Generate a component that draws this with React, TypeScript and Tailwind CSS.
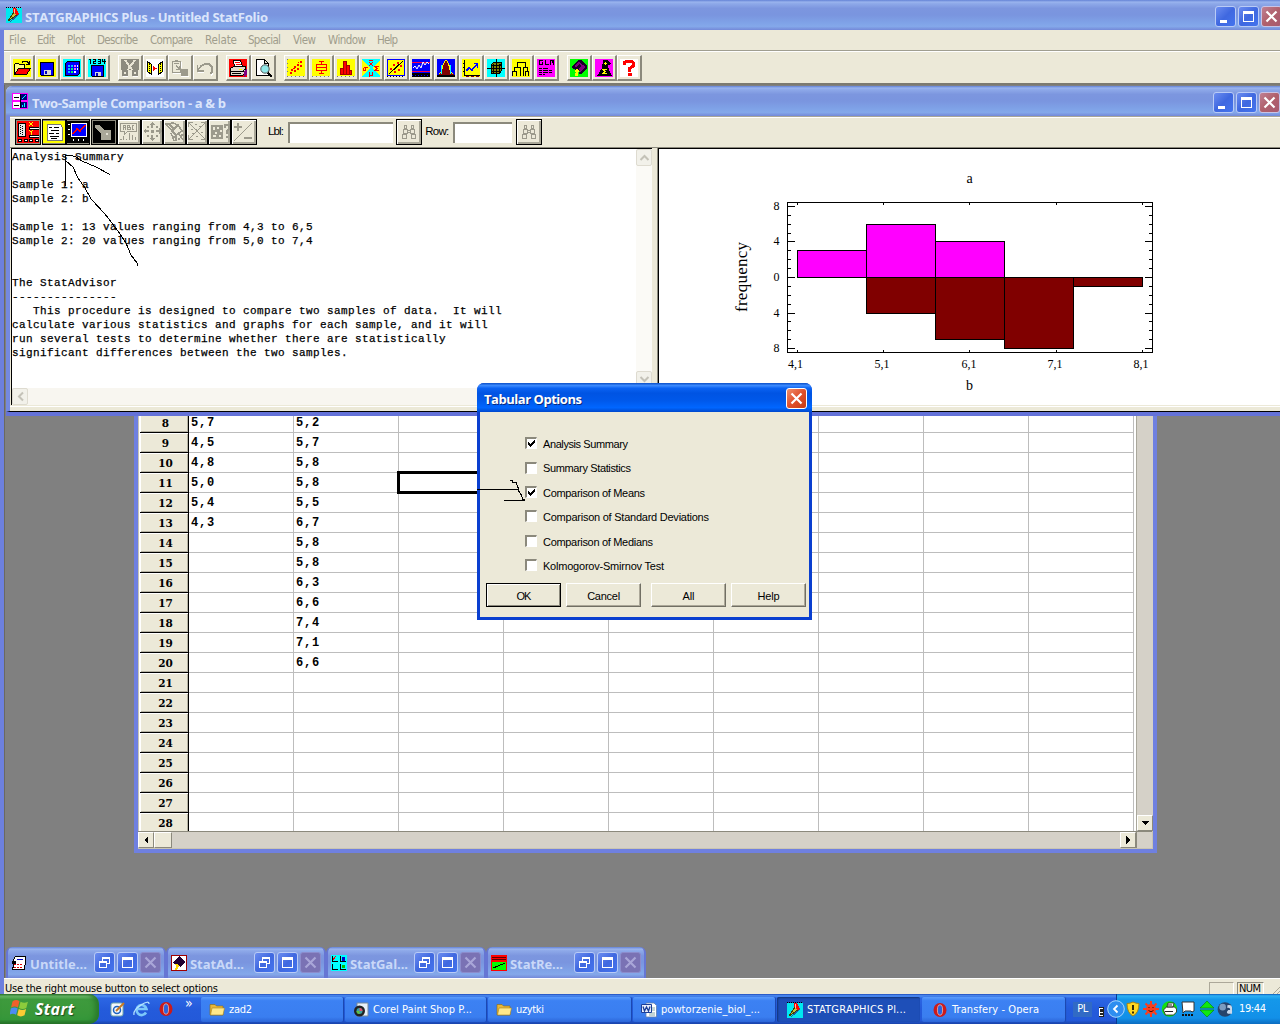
import React, { useLayoutEffect, useRef } from "react";

type Kids = { children?: React.ReactNode };

/* Text spaced so that it takes exactly `w` pixels. */
function Fit({ w, children, className = "" }: { w: number; children: string; className?: string }) {
  const ref = useRef<HTMLSpanElement>(null);
  useLayoutEffect(() => {
    const el = ref.current;
    if (!el) return;
    el.style.letterSpacing = "0px";
    const natural = el.getBoundingClientRect().width;
    el.style.letterSpacing = `${(w - natural) / Math.max(1, children.length - 1)}px`;
  }, [w, children]);
  return (
    <span ref={ref} className={`inline-block shrink-0 whitespace-pre ${className}`}>
      {children}
    </span>
  );
}

const TAHOMA = "font-['DejaVu_Sans_Condensed','DejaVu_Sans','Noto_Sans',sans-serif]";
const ARIAL = "font-['Liberation_Sans',sans-serif]";
const CAPTION = "font-['Open_Sans','Noto_Sans',sans-serif] font-bold";
const INACTIVE =
  "bg-[linear-gradient(to_bottom,#6483d6_0%,#9ab4ee_7%,#8ea9e9_12%,#7c96df_28%,#7a95df_50%,#7fa2e7_75%,#84a8ea_88%,#7489d8_100%)]";

function Svg({ size = 18, children, className = "", box = 18 }: Kids & { size?: number; className?: string; box?: number }) {
  return (
    <svg width={size} height={size} viewBox={`0 0 ${box} ${box}`} shapeRendering="crispEdges" className={`block shrink-0 ${className}`} fill="none">
      {children}
    </svg>
  );
}

const B = "#000";
const Y = "#ffff00";
const G = "#9c9a8c";

/* ---------- toolbar icons ---------- */
const icons: Record<string, React.ReactNode> = {
  open: (
    <>
      <path fill={Y} d="M0 0h18v18H0z" />
      <path stroke={B} fill="#ffff80" d="M1.500 15.500v-10l1-1h3l1 1h5v3" />
      <path stroke={B} fill="#ff0000" d="M1.500 15.500l4-6h12l-4 6z" />
      <path stroke={B} d="M9 3.500l2-1.500h3l2 3M13 5.500h4M16.500 2v4" />
    </>
  ),
  save: (
    <>
      <path fill={Y} d="M0 0h18v18H0z" />
      <path fill="#0000ff" stroke={B} d="M2.500 3.500h13v13h-12l-1-1z" />
      <path fill="#d8d8d8" d="M6 11h7v5H6z" />
      <path fill="#0000c0" d="M7 12h2v3H7z" />
    </>
  ),
  grid: (
    <>
      <path fill="#00ffff" d="M0 0h18v18H0z" />
      <path fill="#0000ff" stroke={B} d="M2.500 4.500l2-2h12v12l-2 2h-12z" />
      <path fill="#00c8ff" d="M5 6h2v2H5zM8 6h2v2H8zM5 9h2v2H5zM5 12h2v2H5z" />
      <path fill="#ff60ff" d="M11 6h2v2h-2zM11 9h2v2h-2z" />
      <path fill="#00ff60" d="M8 9h2v2H8zM8 12h2v2H8z" />
      <path fill="#fff" d="M14 6h1v2h-1zM14 9h1v2h-1zM11 12h2v2h-2z" />
    </>
  ),
  save1234: (
    <>
      <path fill="#00ffff" d="M0 0h18v18H0z" />
      <path stroke={B} d="M1 .5h1.500V5M5 .5h2.500v2H5.500v2H8M10 .5h2.500v4H10M10 2.500h3M14.500 0v2.500H18M16.500 0v5" />
      <path fill="#0000ff" stroke={B} d="M3.500 6.500h12v11h-11l-1-1z" />
      <path fill="#d8d8d8" d="M7 13h6v4H7z" />
      <path fill="#0000c0" d="M8 14h2v3H8z" />
    </>
  ),
  cut: (
    <>
      <path fill="#8c8a7e" d="M0 0h18v11H0z" />
      <path stroke="#e8e4d4" strokeWidth="2" d="M4 1l8 11M14 1L6 12" />
      <path stroke="#8c8a7e" strokeWidth="2" d="M2 12h4v4H2zM12 12h4v4h-4z" />
      <path stroke="#fff" d="M2 17.500h5M12 17.500h5" />
    </>
  ),
  copy: (
    <>
      <path fill="#fff" d="M0 0h18v18H0z" />
      <path fill={Y} stroke={B} d="M1.500 2.500l4 3v10l-4-3zM16.500 2.500l-4 3v10l4-3z" />
      <path fill="#ff0000" d="M7 7l4 2.500L7 12z" />
      <path stroke={B} strokeDasharray="1 1" d="M3.500 5v8M14.500 5v8" />
    </>
  ),
  paste: (
    <>
      <path stroke={G} d="M1.500 2.500h8v11h-8zM4 1.500h3M3 4.500h5M5 6.500l3 3M8.500 7v3H5" />
      <path fill={G} d="M10 10h7v7h-7z" />
      <path stroke="#fff" d="M2 14.500h8M10.500 3v6M10 17.500h8" />
    </>
  ),
  undo: (
    <>
      <path stroke={G} strokeWidth="1.500" d="M2 11l3-4 4-2h4l3 3v5l-2 2M1.500 6v6h6" />
      <path stroke="#fff" d="M2 13.500h6M15 16.500l2-2" />
    </>
  ),
  print: (
    <>
      <path fill="#ff0000" d="M0 0h18v18H0z" />
      <path fill="#fff" stroke={B} d="M5.500 7.500l-1-6h7l2 6z" />
      <path stroke="#ff0000" d="M6 3.500h5M7 5.500h5" />
      <path fill="#e0dcd0" stroke={B} d="M1.500 9.500l3-2h12v6l-3 3h-12z" />
      <path stroke={B} d="M2 12.500h12l3-4M3 14.500h9" />
      <path fill={Y} d="M10 10h3v1h-3z" />
      <path fill="#800080" d="M15 13l3-4v6l-3 3z" />
    </>
  ),
  preview: (
    <>
      <path fill="#fff" stroke={B} d="M2.500.5h8l4 4v12h-12zM10.500.5v4h4" />
      <circle cx="11" cy="10" r="4.200" fill="#90e8e8" stroke="#555" shapeRendering="auto" />
      <path stroke={B} strokeWidth="2" d="M14 14l4 4" />
    </>
  ),
  scatter: (
    <>
      <path fill={Y} d="M0 0h18v17H0z" />
      <path fill="#ff0000" d="M3 13h2v2H3zM4 10h2v2H4zM7 11h2v2H7zM7 7h2v2H7zM10 9h2v2h-2zM10 5h2v2h-2zM13 6h2v2h-2zM13 2h2v2h-2zM6 9h2v1H6zM11 3h1v1h-1z" />
      <path stroke="#777" strokeDasharray="1 3" d="M0 17.500h18M.5 0v16" />
    </>
  ),
  box: (
    <>
      <path fill={Y} d="M0 0h18v17H0z" />
      <path stroke="#ff0000" d="M9.500 2v3M4.500 5.500h10v6h-10zM4 8.500h11M9.500 12v3M7 2.500h5M7 14.500h5" />
      <path stroke="#777" strokeDasharray="1 3" d="M0 17.500h18" />
    </>
  ),
  hist: (
    <>
      <path fill={Y} d="M0 0h18v17H0z" />
      <path fill="#ff0000" stroke="#a00000" d="M3.500 9.500h3v6h-3zM6.500 2.500h3v13h-3zM9.500 6.500h3v9h-3zM12.500 11.500h2v4h-2z" />
      <path stroke="#777" strokeDasharray="1 3" d="M0 17.500h18" />
    </>
  ),
  stats: (
    <>
      <path fill="#00ffff" d="M0 0h18v18H0z" />
      <path fill={Y} d="M0 1l8 8-8 8zM18 1l-8 8 8 8z" />
      <path stroke="#ff0000" d="M7 1.500h4M7 3l4 4M11 3L7 7M1.500 8.500h4M1.500 8.500v3h2v-3M17 7.500h-4l2 2-2 2h4M7.500 13v5M7.500 16.500h3V13" />
    </>
  ),
  fit: (
    <>
      <path fill={Y} stroke="#0000ff" d="M.5.5h17v16H.5z" />
      <path stroke={B} d="M2 15L16 2" />
      <path fill="#ff0000" d="M3 9h2v2H3zM6 5h2v2H6zM10 3h2v2h-2zM7 12h2v2H7zM11 10h2v2h-2zM13 6h2v2h-2z" />
      <path stroke={B} strokeDasharray="1 2" d="M0 17.500h18" />
    </>
  ),
  control: (
    <>
      <path fill="#0000ff" d="M0 0h18v18H0z" />
      <path stroke="#ff0040" d="M0 3.500h18M0 12.500h18" />
      <path stroke="#fff" d="M1 9l2-2 2 3 2-4 2 3 2-6 2 3 2-3 2 2" shapeRendering="auto" />
      <path fill={B} d="M0 14h18v4H0z" />
      <path stroke="#0000ff" strokeDasharray="1 2" d="M0 16.500h18" />
    </>
  ),
  dist: (
    <>
      <path fill="#0000ff" d="M0 0h18v18H0z" />
      <path fill="#800000" stroke={Y} d="M1.500 15.500l3-3 2-8 2-3h1l2 3 2 8 3 3" />
      <path stroke="#00ffff" d="M4.500 6v9M13.500 6v9" />
      <path fill={B} d="M0 16h18v2H0z" />
    </>
  ),
  trend: (
    <>
      <path fill={Y} d="M0 0h18v18H0z" />
      <path stroke={B} d="M2.500 1v15.500H18M1 4.500h1M1 8.500h1M1 12.500h1" />
      <path stroke="#0000ff" strokeWidth="1.600" d="M4 12l3-3 3 2 5-6M12 4.500h4M15.500 4v5" />
      <path stroke="#800000" strokeDasharray="3 2" d="M4 17.500h14" />
    </>
  ),
  cube: (
    <>
      <path fill="#00ffff" d="M0 0h18v18H0z" />
      <path fill="#808000" stroke={B} d="M4.500 5.500l2-2h8v8l-2 3h-8z" />
      <path stroke={B} d="M9.500 0v18M0 9.500h18M4 6.500h9l2-2M4 12.500h9M6.500 5v9M12.500 5v9" />
    </>
  ),
  tree: (
    <>
      <path fill={Y} d="M0 0h18v18H0z" />
      <path stroke={B} d="M5.500 8V3.500h8V8M2.500 12V8.500h6V17M11.500 17V8.500h4V12M.5 17v-4.500h4V17M13.500 17v-4.500h3V17" />
    </>
  ),
  glm: (
    <>
      <path fill="#ff00ff" d="M0 0h18v18H0z" />
      <path stroke={B} d="M6 1.500H2.500v4h3V3M8.500 1v4.500h3M13.500 6V1.500h3V6M15 2v2" />
      <path stroke={B} strokeDasharray="3 1 5 1" d="M2 9.500h10M2 11.500h14M2 13.500h13M2 15.500h6" />
    </>
  ),
  advisor: (
    <>
      <path fill="#00ff00" d="M0 0h18v18H0z" />
      <path fill="#180028" d="M9 1h2l6 6v3l-6 5H9l1-3-4-1-4-2V7z" />
      <path stroke="#800080" strokeWidth="1.500" d="M5 8l4-4 4 3-4 4M10 12l5-4" />
      <path fill={Y} d="M5 11l2-1 2 2-1 2v3H5v-3h1z" />
    </>
  ),
  wizard: (
    <>
      <path fill="#ff00ff" d="M0 0h18v18H0z" />
      <path fill={B} d="M8 1h5l3 4-3 1 1 5 3 6H2l5-8z" />
      <path stroke={Y} d="M12 10.500H8l2 2-2 2h4M9 4.500h3M10.500 3v3" />
    </>
  ),
  help: (
    <>
      <path fill="#fff" d="M0 0h18v18H0z" />
      <path stroke="#ff0000" strokeWidth="3" d="M4.500 6V3.500l2-1.500h5l2 2v3l-4 2.500V13" />
      <path fill="#ff0000" d="M8 14h4v3H8z" />
    </>
  ),
};

function ToolButton({ icon }: { icon: string }) {
  return (
    <div className="flex h-[26px] w-[25px] items-start border-t border-r-2 border-b-2 border-l border-t-white border-r-[#8b897c] border-b-[#8b897c] border-l-white pt-[3px] pl-[2px]">
      <Svg size={18}>{icons[icon]}</Svg>
    </div>
  );
}

/* ---------- analysis toolbar icons ---------- */
const analysisIcons: [string, number, React.ReactNode][] = [
  [
    "input",
    26,
    <>
      <path fill="#ff0000" d="M0 0h22v22H0z" />
      <path fill="#e8e8e8" stroke={B} d="M1.500 2.500h7v13h-7z" />
      <path stroke={B} strokeDasharray="1 1" d="M3.500 4v10M5.500 5v10" />
      <path stroke={Y} d="M12 1l4 4M16 1l-4 4M12 9l2 2v3M16 9l-2 2" />
      <path stroke={B} strokeWidth="3" d="M12 7.500h10M12 15.500h10" />
      <path stroke="#fff" d="M13 7.500h9M13 15.500h9" />
      <path fill="#fff" stroke={B} d="M1.500 18.500h3v2h-3zM7.500 18.500h3v2h-3zM12.500 18.500h3v2h-3zM18.500 18.500h3v2h-3z" />
    </>,
  ],
  [
    "tabular",
    24,
    <>
      <path fill={Y} d="M0 0h22v22H0z" />
      <path fill="#fff" stroke="#777" d="M4.500 3.500h13l2 3v13h-15z" />
      <path stroke={B} d="M6 6.500h3M11 6.500h5M8 9.500h8M6 12.500h5M13 12.500h3M7 15.500h9M8 17.500h6" />
    </>,
  ],
  [
    "graph",
    24,
    <>
      <path fill={B} d="M0 0h22v22H0z" />
      <path fill="#0000ff" stroke="#fff" d="M4.500 2.500h15v13h-15z" />
      <path stroke="#ff0000" strokeWidth="1.500" d="M6 13l4-5 3 2 5-6" />
      <path stroke="#fff" d="M1 3.500h2M1 8.500h2M1 13.500h2M6.500 18v2M11.500 18v2M16.500 18v2" />
    </>,
  ],
  [
    "savecam",
    26,
    <>
      <path fill={B} d="M0 0h22v22H0z" />
      <path fill="#aaa899" d="M2 4h4l5 5h7v10H8v-7L2 7z" />
      <path fill="#e4e1d4" d="M13 12h2v2h-2z" />
    </>,
  ],
  ["label", 24, <path key="p" stroke={G} d="M2.500 2.500h16v8h-9l-3 3v-3h-4zM5.500 9V4.500h2V9M5 6.500h3M9.500 4v4.500h3v-2h-3v-2h2v2M16 4.500h-2v4h2M2 18.500h2M5.500 15v4M8.500 18v1M11.500 12v7M14.500 14v5M17.500 16v3" />],
  ["jitter", 22, <path key="p" fill={G} d="M10 1l3 3h-2v3H9V4H7zM10 20l-3-3h2v-3h2v3h2zM1 10l3-3v2h3v2H4v2zM20 10l-3-3v2h-3v2h3v2zM9 9h3v3H9zM5 5h2v2H5zM14 5h2v2h-2zM5 14h2v2H5zM14 14h2v2h-2z" />],
  ["brush", 23, <path key="p" stroke={G} strokeWidth="1.500" d="M2 3l6 7 6-6-5-2zM5 3l5 5M8 10l6-6 4 6-6 4zM9 16h2M14 18h2M17 14h3M7 12l3 8M12 15v5M15 13l4 6" />],
  ["zoom", 22, <path key="p" stroke={G} d="M2 2l16 16M18 2L2 18M1.500 6V1.500H6M18.500 14v4.500H14M14 1.500h4.500V6M1.500 14v4.500H6M8 3.500h2M4 8.500h2M12 5.500h2M8 8.500h2M5 12.500h2M14 11.500h2M9 15.500h2" />],
  [
    "what",
    23,
    <>
      <path fill={G} d="M2 4h12v14H2z" />
      <path fill="#ece9d8" d="M4 6h2v3H4zM8 6h2v2H8zM6 11h2v2H6zM11 9h2v2h-2zM4 14h3v2H4zM10 14h2v2h-2z" />
      <path stroke={G} strokeWidth="2" d="M16 7V4h4v4l-2 2v3M17 16h2" />
    </>,
  ],
  [
    "plusminus",
    26,
    <>
      <path stroke={G} strokeWidth="2" d="M2 6h8M6 2v8M12 17h8" />
      <path stroke={G} d="M20 2L2 20" />
    </>,
  ],
];

function AnalysisButton({ w, children, raised = true, center = true }: Kids & { w: number; raised?: boolean; center?: boolean }) {
  return (
    <div
      style={{ width: w }}
      className={`flex h-[26px] shrink-0 items-center overflow-hidden border border-black ${center ? "justify-center" : "justify-start"} ${
        raised ? "shadow-[inset_1px_1px_0_#fff,inset_-2px_-2px_0_#a9a798]" : "bg-[#8b897c]"
      }`}
    >
      {children}
    </div>
  );
}

const Binoculars = () => (
  <Svg size={16} box={16}>
    <path stroke={G} d="M3.500 1.500h2v3h-2zM10.500 1.500h2v3h-2zM2.500 5.500h4v4h-4zM9.500 5.500h4v4h-4zM1.500 10.500h4v4h-4zM10.500 10.500h4v4h-4zM7 6.500h2M7 8.500h2" />
  </Svg>
);

/* ---------- window buttons ---------- */
function CaptionButton({ kind, off = false }: { kind: "min" | "max" | "close" | "restore"; off?: boolean }) {
  const tone =
    kind === "close"
      ? off
        ? "border-[#8c8ccc] bg-[#7a72b4]"
        : "border-[#c9c3e4] bg-[linear-gradient(135deg,#c08092,#b0606c_50%,#a85a70)]"
      : "border-[#b9cbf6] bg-[linear-gradient(135deg,#6c8df0,#3f68e0_50%,#4474ee)]";
  return (
    <div className={`h-[21px] w-[21px] shrink-0 rounded-[3px] border ${tone}`}>
      <Svg size={19} box={19}>
        {kind === "min" && <path fill="#fff" d="M4 13h7v3H4z" />}
        {kind === "max" && <path fill="#fff" fillRule="evenodd" d="M4 4h11v11H4zM5 7v7h9V7z" />}
        {kind === "restore" && <path fill="#fff" fillRule="evenodd" d="M7 4h8v7h-3v4H4V8h3zM8 6v2h4v2h2V6zM5 10v4h6v-4z" />}
        {kind === "close" && <path stroke={off ? "#a9a6d8" : "#fff"} strokeWidth="2.200" d="M4.500 4.500l10 10M14.500 4.500l-10 10" shapeRendering="auto" />}
      </Svg>
    </div>
  );
}

const AppIcon = ({ size = 16 }: { size?: number }) => (
  <Svg size={size} box={16}>
    <path fill="#00e8f0" d="M0 1h16v15H0z" />
    <path stroke={B} strokeDasharray="1 1" d="M0 .5h16" />
    <path fill="#c8c040" stroke="#404000" d="M2 14l6-9 3 3z" />
    <path fill="#ff0000" d="M7 1h3l3 6-2 2-4-4z" />
    <path fill="#ffc0a0" d="M8 2h1v4H8z" />
    <path stroke="#2060a0" d="M4 15l9-8" />
  </Svg>
);

/* ---------- main frame top ---------- */
function TitleBar() {
  return (
    <div className={`flex h-[30px] items-center ${INACTIVE} pl-[6px]`}>
      <AppIcon />
      <Fit w={243} className={`mt-[5px] ml-[3px] text-[13px] text-[#dbe5fb] ${CAPTION}`}>STATGRAPHICS Plus - Untitled StatFolio</Fit>
      <div className="mt-[2px] ml-auto flex w-[65px] gap-[2px] overflow-hidden">
        <CaptionButton kind="min" />
        <CaptionButton kind="max" />
        <CaptionButton kind="close" />
      </div>
    </div>
  );
}

const menus: [string, number, number][] = [
  ["File", 17, 28],
  ["Edit", 18, 30],
  ["Plot", 18, 30],
  ["Describe", 41, 53],
  ["Compare", 43, 55],
  ["Relate", 32, 43],
  ["Special", 33, 45],
  ["View", 23, 35],
  ["Window", 38, 49],
  ["Help", 21, 33],
];

function MenuBar() {
  return (
    <div className={`flex h-[20px] items-center pl-[5px] text-[11.500px] leading-[18px] text-[#a09d8c] ${TAHOMA}`}>
      {menus.map(([label, w, cell]) => (
        <div key={label} style={{ width: cell }} className="flex">
          <Fit w={w}>{label}</Fit>
        </div>
      ))}
    </div>
  );
}

const groups: string[][] = [
  ["open", "save", "grid", "save1234"],
  ["cut", "copy", "paste", "undo"],
  ["print", "preview"],
  ["scatter", "box", "hist", "stats", "fit", "control", "dist", "trend", "cube", "tree", "glm"],
  ["advisor", "wizard", "help"],
];

function MainToolbar() {
  return (
    <div className="flex h-[35px] items-start gap-[8px] border-t border-b-2 border-t-[#a09e90] border-b-[#7c7a70] pt-[4px] pl-[6px] shadow-[inset_0_1px_0_#fff]">
      {groups.map((g) => (
        <div key={g[0]} className="flex">
          {g.map((i) => (
            <ToolButton key={i} icon={i} />
          ))}
        </div>
      ))}
    </div>
  );
}

/* ---------- spreadsheet window ---------- */
const colA = ["5,7", "4,5", "4,8", "5,0", "5,4", "4,3"];
const colB = ["5,2", "5,7", "5,8", "5,8", "5,5", "6,7", "5,8", "5,8", "6,3", "6,6", "7,4", "7,1", "6,6"];

function Arrow({ dir }: { dir: "left" | "right" | "down" }) {
  return (
    <div className="flex h-[16px] w-[16px] shrink-0 items-center justify-center border border-t-white border-r-[#8b897c] border-b-[#8b897c] border-l-white bg-[#ece9d8]">
      <Svg size={8} box={8}>
        <path fill={B} d={dir === "left" ? "M6 0v8L2 4z" : dir === "right" ? "M2 0v8l4-4z" : "M0 2h8L4 6z"} />
      </Svg>
    </div>
  );
}

function DataSheet() {
  const rows = Array.from({ length: 21 }, (_, i) => i + 8);
  return (
    <div className="absolute top-[300px] left-[130px] flex h-[468px] w-[1023px] flex-col border-[4px] border-[#6f80e0] bg-[#ece9d8] shadow-[inset_0_0_0_1px_#c8c4b4]">
      <div className="flex h-[442px] pl-[1px]">
        <div className="flex w-[998px] flex-col overflow-hidden border-r border-[#a9a79b] bg-white pt-[24px] pl-[1px]">
          {rows.map((n, i) => (
            <div key={n} className="flex h-[20px] shrink-0">
              <div className="flex w-[49px] shrink-0 items-center justify-center border-r border-b border-black bg-[#ece9d8] pt-[2px] pl-[3px] font-['DejaVu_Serif',serif] text-[10.500px] leading-none font-bold shadow-[inset_1px_1px_0_#fff,inset_-1px_-1px_0_#b5b2a2]">
                {n}
              </div>
              {Array.from({ length: 9 }, (_, c) => (
                <div
                  key={c}
                  className="w-[105px] shrink-0 border-r border-b border-[#bdbdbd] pl-[2px] font-['Liberation_Mono',monospace] text-[12px] leading-[20px] font-bold tracking-[0.800px]"
                >
                  {c === 0 ? colA[i] : c === 1 ? colB[i] : ""}
                </div>
              ))}
            </div>
          ))}
        </div>
        <div className="flex w-[16px] flex-col justify-end bg-[#d5d1c8]">
          <Arrow dir="down" />
        </div>
      </div>
      <div className="flex h-[17px] w-[1014px] border-t border-[#8b897c] bg-[#d5d1c8]">
        <Arrow dir="left" />
        <div className="h-[16px] w-[18px] border border-t-white border-r-[#8b897c] border-b-[#8b897c] border-l-white bg-[#ece9d8]" />
        <div className="flex-1" />
        <Arrow dir="right" />
        <div className="w-[16px] border-l border-[#8b897c]" />
      </div>
      <div className="absolute top-[82px] left-[259px] h-[23px] w-[107px] border-[3px] border-black" />
    </div>
  );
}

/* ---------- analysis window ---------- */
const report = `Analysis Summary

Sample 1: a
Sample 2: b

Sample 1: 13 values ranging from 4,3 to 6,5
Sample 2: 20 values ranging from 5,0 to 7,4


The StatAdvisor
---------------
   This procedure is designed to compare two samples of data.  It will
calculate various statistics and graphs for each sample, and it will
run several tests to determine whether there are statistically
significant differences between the two samples.`;

function GhostArrow({ d }: { d: string }) {
  return (
    <div className="flex h-[17px] w-[16px] shrink-0 items-center justify-center rounded-[2px] border border-[#dedbd0] bg-[#f2f1ea]">
      <svg width="11" height="11" viewBox="0 0 11 11" fill="none" stroke="#c4c2b8" strokeWidth="2">
        <path d={d} />
      </svg>
    </div>
  );
}

function Histogram() {
  const top = [3, 6, 4];
  const bottom = [0, 4, 7, 8, 1];
  const yUp = [277, 268, 259, 250, 241, 233, 224, 215, 206];
  const yDown = [277, 286, 295, 304, 313, 321, 330, 339, 348];
  const xs = [797, 883, 969, 1056, 1142];
  return (
    <svg width="621" height="256" viewBox="659 149 621 256" shapeRendering="crispEdges" className="block">
      <g stroke="#000" strokeWidth="1">
        {top.map((v, i) => (
          <rect key={i} x={797.5 + i * 69} y={yUp[v] + 0.5} width="69" height={277 - yUp[v]} fill="#ff00ff" />
        ))}
        {bottom.map((v, i) => v > 0 && <rect key={i} x={797.5 + i * 69} y="277.500" width="69" height={yDown[v] - 277} fill="#800000" />)}
        <rect x="787.500" y="202.500" width="365" height="150" fill="none" />
        {[...yUp, ...yDown.slice(1)].map((y, i) => {
          const len = (i < 9 ? i % 4 : (i - 8) % 4) === 0 ? 7 : 3;
          return <path key={y} d={`M788 ${y + 0.5}h${len}M1152 ${y + 0.5}h-${len}`} />;
        })}
        {xs.map((x) => (
          <path key={x} d={`M${x + 0.5} 203v2M${x + 0.5} 352v-2`} />
        ))}
      </g>
      <g fontFamily="Liberation Serif, serif" fontSize="12" textAnchor="middle">
        {[8, 4, 0, 4, 8].map((v, i) => (
          <text key={i} x="776.500" y={[210, 245, 281, 317, 352][i]}>{v}</text>
        ))}
        {["4,1", "5,1", "6,1", "7,1", "8,1"].map((t, i) => (
          <text key={t} x={[795.5, 882, 969, 1055, 1141][i]} y="368">{t}</text>
        ))}
        <text x="969.500" y="183" fontSize="14">a</text>
        <text x="969.500" y="390" fontSize="14">b</text>
        <text transform="translate(747 277) rotate(-90)" fontSize="17" textLength="70">frequency</text>
      </g>
    </svg>
  );
}

function AnalysisWindow() {
  return (
    <div className="absolute top-[1px] left-[2px] flex h-[330px] w-[1274px] flex-col overflow-hidden rounded-tl-[6px] border-b-[4px] border-[#6472d8] bg-[#ece9d8]">
      <div className={`flex h-[30px] shrink-0 items-center ${INACTIVE} pl-[6px]`}>
        <Svg size={16} box={16}>
          <path fill="#ff00ff" d="M0 0h16v16H0z" />
          <path fill="#fff" d="M1 1h7v6H1zM1 9h7v6H1z" />
          <path fill="#000080" d="M9 1h6v6H9zM9 9h6v6H9z" />
          <path stroke={B} d="M2 4.500h5M2 12.500h5M8.500 1v14" />
          <path stroke="#00ffff" d="M10 6l4-4M10.500 14v-2M12.500 14v-4" />
        </Svg>
        <Fit w={194} className={`mt-[6px] ml-[4px] text-[13px] text-[#dbe5fb] ${CAPTION}`}>{"Two-Sample Comparison - a & b"}</Fit>
        <div className="mt-[3px] ml-auto flex gap-[2px]">
          <CaptionButton kind="min" />
          <CaptionButton kind="max" />
          <CaptionButton kind="close" />
        </div>
      </div>
      <div className="flex min-h-0 flex-1 flex-col border-b border-l-[4px] border-b-black border-l-[#7489e0]">
        <div className={`flex h-[31px] shrink-0 items-center border-t border-[#a9a798] pl-[5px] text-[11.500px] shadow-[inset_0_1px_0_#fff] ${ARIAL}`}>
          {analysisIcons.map(([id, w, art], i) => (
            <div key={id} className={i === 0 || i === 2 ? "mr-px" : ""}>
              <AnalysisButton w={w} raised={i > 3} center={i < 4}>
                <Svg size={22} box={22}>{art}</Svg>
              </AnalysisButton>
            </div>
          ))}
          <Fit w={16} className="ml-[11px]">Lbl:</Fit>
          <div className="mt-px ml-[5px] h-[21px] w-[105px] border-t-2 border-l-2 border-[#8b897c] bg-white" />
          <div className="ml-[3px]">
            <AnalysisButton w={26}><Binoculars /></AnalysisButton>
          </div>
          <Fit w={24} className="ml-[3px]">Row:</Fit>
          <div className="mt-px ml-[5px] h-[21px] w-[59px] border-t-2 border-l-2 border-[#8b897c] bg-white" />
          <div className="ml-[4px]">
            <AnalysisButton w={26}><Binoculars /></AnalysisButton>
          </div>
        </div>
        <div className="flex h-[258px] shrink-0 border-t border-[#8b897c] pl-[1px]">
          <div className="flex w-[641px] shrink-0 flex-col border-t border-l border-black bg-white">
            <div className="flex h-[239px]">
              <pre className="min-w-0 flex-1 pt-[1px] font-['Liberation_Mono',monospace] text-[11px] leading-[14px] tracking-[0.399px] [-webkit-text-stroke:0.25px_#000]">{report}</pre>
              <div className="flex w-[16px] flex-col justify-between bg-[#fbfaf6]">
                <GhostArrow d="M1.500 8l4-4 4 4" />
                <GhostArrow d="M1.500 3l4 4 4-4" />
              </div>
            </div>
            <div className="flex h-[17px] w-[640px] bg-[#f8f6f0]">
              <GhostArrow d="M8 1.500l-4 4 4 4" />
            </div>
          </div>
          <div className="w-[6px] shrink-0 border-r border-[#8b897c] bg-[#ece9d8]" />
          <div className="w-[622px] shrink-0 border-t border-l border-black bg-white">
            <Histogram />
          </div>
        </div>
        <div className="mt-px h-px bg-white" />
      </div>
    </div>
  );
}

/* ---------- minimised windows ---------- */
const minimised: [string, number, React.ReactNode][] = [
  [
    "Untitle...",
    57,
    <>
      <path fill="#fff" stroke={B} d="M4.500 1.500h10v4l-1 9h-12l1-4v-6z" />
      <path fill={B} d="M1 6h4v3H1z" />
      <path stroke="#e00000" strokeDasharray="2 1" d="M3 9.500h9M3 12.500h9" />
      <path stroke="#0000c0" d="M6 4.500h6" />
    </>,
  ],
  [
    "StatAd...",
    54,
    <>
      <path fill="#fff" stroke="#a00000" d="M.5.5h15v15H.5z" />
      <path fill="#200030" d="M8 1l6 6-5 5-1-2-3 1-3-3z" />
      <path fill="#ffd800" d="M4 9h3l1 2-2 4H4l1-4z" />
    </>,
  ],
  [
    "StatGal...",
    58,
    <>
      <path fill="#00ffff" d="M0 0h16v16H0z" />
      <path stroke={B} d="M1.500 1v5.500H7M9.500 1v5.500H15M1.500 9v5.500H7M9.500 9v5.500H15" />
      <path stroke="#ff0000" d="M2 5l3-4" />
      <path fill="#0000d0" d="M11 2h3v4h-3z" />
      <path fill="#00c000" d="M11 10h3v3h-3z" />
    </>,
  ],
  [
    "StatRe...",
    53,
    <>
      <path fill="#00ff00" stroke="#ff0000" d="M.5.5h15v15H.5z" />
      <path fill="#ff0000" d="M0 0h16v7H0z" />
      <path stroke="#600000" d="M1 2.500h14M1 4.500h14" />
      <path stroke={B} d="M2 13l5-2 7-3" />
    </>,
  ],
];

function Minimised() {
  return (
    <div className="absolute bottom-0 left-[2px] flex">
      {minimised.map(([label, w, art]) => (
        <div key={label} className={`flex h-[31px] w-[160px] items-center rounded-t-[6px] border-r-2 border-l-2 border-[#6676d4] ${INACTIVE} pr-[3px] pl-[3px]`}>
          <Svg size={16} box={16}>{art}</Svg>
          <Fit w={w} className={`mt-[4px] ml-[3px] text-[13px] text-[#c9d8f8] ${CAPTION}`}>{label}</Fit>
          <div className="ml-auto flex gap-[2px]">
            <CaptionButton kind="restore" />
            <CaptionButton kind="max" />
            <CaptionButton kind="close" off />
          </div>
        </div>
      ))}
    </div>
  );
}

/* ---------- status bar and taskbar ---------- */
function StatusBar() {
  return (
    <div className={`flex h-[16px] overflow-hidden border-t border-white bg-[#ece9d8] pl-[1px] text-[11px] text-black ${TAHOMA}`}>
      <Fit w={213} className="mt-[4px] leading-[11px]">Use the right mouse button to select options</Fit>
      <div className="mt-[3px] mr-[3px] ml-auto h-[12px] w-[25px] border border-b-0 border-[#aca899] border-r-white" />
      <div className="mt-[3px] flex h-[12px] w-[27px] border border-b-0 border-[#8b897c] border-r-white pl-[1px]">
        <Fit w={22} className="leading-[11px]">NUM</Fit>
      </div>
      <svg width="16" height="16" viewBox="0 0 16 16" stroke="#aca899">
        <path d="M9 15L16 8M13 15l3-3" />
      </svg>
    </div>
  );
}

const Folder = () => (
  <svg width="16" height="16" viewBox="0 0 16 16">
    <path d="M1 2.500h5l1.500 1.500H14v9H1z" fill="#e8b73a" stroke="#8a6a10" strokeWidth=".6" />
    <path d="M3 6h12.500L14 13H1.500z" fill="#ffe88a" stroke="#a88420" strokeWidth=".6" />
  </svg>
);
const Opera = () => (
  <svg width="16" height="16" viewBox="0 0 16 16">
    <ellipse cx="8" cy="8" rx="6.500" ry="7" fill="#cc1a1a" />
    <ellipse cx="8" cy="8" rx="2.600" ry="5.200" fill="#2d62dc" stroke="#f6b0a0" strokeWidth=".8" />
  </svg>
);
const PaintShop = () => (
  <svg width="16" height="16" viewBox="0 0 16 16">
    <path d="M4 1h11v13H4z" fill="#e8f0f8" stroke="#789" />
    <circle cx="6.500" cy="9" r="5.500" fill="#222" />
    <circle cx="6.500" cy="9" r="3" fill="#3aa0a0" />
    <path d="M6.500 6a3 3 0 0 1 3 3h-3z" fill="#e05070" />
    <path d="M3.500 9a3 3 0 0 0 3 3V9z" fill="#60c040" />
  </svg>
);
const Word = () => (
  <svg width="16" height="16" viewBox="0 0 16 16">
    <path d="M5 1h8l2.500 2.500V15H5z" fill="#fff" stroke="#6080b0" strokeWidth=".8" />
    <path d="M11 6h3M11 8h3M8 11h6M8 13h6" stroke="#8aa" />
    <path d="M0.500 2.500h10v8H.5z" fill="#e8eefc" stroke="#1b3f98" />
    <path d="M2 4.500l1.500 4.500 2-4 2 4L9 4.500" fill="none" stroke="#1b3f98" strokeWidth="1.300" />
  </svg>
);

const tasks: [string, number, number, React.ReactNode][] = [
  ["zad2", 144, 23, <Folder key="i" />],
  ["Corel Paint Shop P...", 143, 99, <PaintShop key="i" />],
  ["uzytki", 145, 28, <Folder key="i" />],
  ["powtorzenie_biol_...", 144, 99, <Word key="i" />],
  ["STATGRAPHICS Pl...", 145, 99, <AppIcon key="i" />],
  ["Transfery - Opera", 145, 87, <Opera key="i" />],
];

function Taskbar() {
  return (
    <div className={`flex h-[30px] bg-[linear-gradient(to_bottom,#1c49b8_0%,#4f8ff4_6%,#2c66e4_14%,#245bdb_50%,#2359d9_88%,#1a43a8_100%)] text-[11px] text-white ${TAHOMA}`}>
      <div className="flex w-[99px] shrink-0 items-center rounded-r-[10px] bg-[linear-gradient(to_bottom,#2c6e2c_0%,#6fbb6b_7%,#3e9a3d_18%,#3a983a_60%,#35973a_85%,#236a24_100%)] pl-[10px] shadow-[inset_-4px_0_5px_#2a7a2c]">
        <svg width="20" height="20" viewBox="0 0 19 19" className="-mt-[2px]">
          <path d="M2.500 3q3.500-2 6.500 0L7.500 9Q4.500 7 1 9z" fill="#f0602c" />
          <path d="M10 3.500q3.500 2 7 0l-1.500 6q-3.500 2-7 0z" fill="#8ccc3c" />
          <path d="M.8 10q3.500-2 6.500 0L5.700 16q-3-2-6.200 0z" fill="#4c8cf4" />
          <path d="M8.300 10.500q3.500 2 7 0l-1.500 6q-3.500 2-7 0z" fill="#fccc34" />
        </svg>
        <Fit w={39} className="ml-[5px] font-['Open_Sans','Noto_Sans',sans-serif] text-[16px] font-bold italic [text-shadow:1px_1px_1px_#1d4d1d]">Start</Fit>
      </div>
      <div className="flex w-[102px] shrink-0 items-center pl-[11px]">
        <svg width="16" height="16" viewBox="0 0 16 16">
          <rect x="1" y="2" width="12" height="13" rx="2" fill="#f4f8fc" stroke="#7aa" />
          <circle cx="7" cy="9" r="3.500" fill="none" stroke="#1b62c0" strokeWidth="1.500" />
          <path d="M6 10l8-8" stroke="#c87820" strokeWidth="2" />
        </svg>
        <svg width="17" height="16" viewBox="0 0 17 16" className="ml-[7px]">
          <path d="M13 11.500A5 5 0 1 1 13.500 8H5" fill="none" stroke="#7cc8fa" strokeWidth="2.600" />
          <path d="M1 14Q0 9 8 4t8-1" fill="none" stroke="#b8e4ff" strokeWidth="1.200" />
        </svg>
        <span className="ml-[8px]"><Opera /></span>
        <span className="-mt-[11px] ml-[11px] text-[14px]">»</span>
      </div>
      <div className="flex w-[866px] shrink-0 py-[3px]">
        {tasks.map(([label, w, tw, icon], i) => (
          <div key={label} style={{ width: w }} className="shrink-0 pr-[2px]">
            <div
              className={`flex h-[25px] items-center rounded-[2px] ${i > 3 ? "pl-[10px]" : "pl-[8px]"} ${
                i === 4
                  ? "bg-[#1e4fb8] shadow-[inset_1px_1px_2px_#123478]"
                  : "bg-[linear-gradient(to_bottom,#5a9cfc_0%,#3c81f3_15%,#3a7ef0_80%,#2c66d8_100%)] shadow-[1px_0_1px_#1b46ac]"
              }`}
            >
              {icon}
              <Fit w={tw} className="mt-[2px] ml-[4px]">{label}</Fit>
            </div>
          </div>
        ))}
      </div>
      <div className="flex w-[49px] items-center pl-[6px]">
        <div className="mt-[1px] flex h-[15px] w-[19px] items-center justify-center bg-[#316ac5]"><Fit w={11}>PL</Fit></div>
        <svg width="5" height="10" viewBox="0 0 5 10" className="mt-[6px] ml-[7px]" shapeRendering="crispEdges">
          <path d="M0 0h5v10H0z" fill="#222" />
          <path d="M4 1.500H.5v7H4M1 5h3" fill="none" stroke="#fff" />
        </svg>
      </div>
      <div className="relative flex flex-1 items-center border-l border-[#0a3a90] bg-[linear-gradient(to_bottom,#0c59b9_0%,#2cb0f4_6%,#1498ea_18%,#1290e8_80%,#0c6cc0_100%)] pl-[8px]">
        <svg width="18" height="18" viewBox="0 0 18 18" className="absolute top-[6px] -left-[10px]">
          <circle cx="9" cy="9" r="8.300" fill="#2e8ef0" stroke="#a8d8ff" />
          <path d="M10.500 5.500L7 9l3.500 3.500" fill="none" stroke="#fff" strokeWidth="1.800" />
        </svg>
        <div className="flex items-center gap-[2px]">
          <svg width="16" height="16" viewBox="0 0 16 16">
            <path d="M8 1q3 1.500 6 1.500Q14 12 8 15 2 12 2 2.500 5 2.500 8 1z" fill="#ffd820" stroke="#a88410" />
            <path d="M8 4v5M8 10.500v2" stroke="#000" strokeWidth="1.600" />
          </svg>
          <svg width="16" height="16" viewBox="0 0 16 16">
            <path d="M8 0v16M0 8h16M2.500 2.500l11 11M13.500 2.500l-11 11" stroke="#ff3a1c" strokeWidth="2" />
            <circle cx="8" cy="8" r="5" fill="#f8401c" />
            <path d="M6 6v1M10 6v1M5.500 9.500q2.500 2.500 5 0" stroke="#401000" fill="none" />
          </svg>
          <svg width="17" height="16" viewBox="0 0 17 16">
            <circle cx="8.500" cy="8" r="7.700" fill="#12e012" />
            <path d="M6 6l1-4h6l-1 4zM2.500 9l3-3h8l2 2v3l-3 3h-8z" fill="#fff" stroke="#222" strokeWidth=".8" />
            <path d="M4 10.500h8M7 4h4" stroke="#222" />
          </svg>
          <svg width="16" height="16" viewBox="0 0 16 16">
            <path d="M2 1h12v9l-2 1-1-1H5l-2 2z" fill="#fff" stroke="#333" />
            <path d="M2 14h12" stroke="#111" strokeWidth="2" strokeDasharray="2 1" />
          </svg>
          <svg width="16" height="16" viewBox="0 0 16 16" className="ml-[1px]">
            <path d="M8 0l7 7H1zM8 16l7-7H1z" fill="#10e810" stroke="#087808" strokeWidth=".6" />
          </svg>
          <svg width="16" height="17" viewBox="0 0 17 17">
            <circle cx="8.500" cy="8.500" r="7.800" fill="#26446c" />
            <circle cx="6" cy="6" r="3.500" fill="#7c9cc0" />
            <path d="M11 4q5-1 5 3v6h-4q-3-1 0-4h2q0-3-3-2z" fill="#c8d8ec" />
          </svg>
        </div>
        <Fit w={27} className="mt-[1px] ml-[6px]">19:44</Fit>
      </div>
    </div>
  );
}

/* ---------- dialog ---------- */
const options: [string, number, boolean][] = [
  ["Analysis Summary", 85, true],
  ["Summary Statistics", 88, false],
  ["Comparison of Means", 102, true],
  ["Comparison of Standard Deviations", 166, false],
  ["Comparison of Medians", 110, false],
  ["Kolmogorov-Smirnov Test", 121, false],
];

function DialogButton({ label, w, primary = false }: { label: string; w: number; primary?: boolean }) {
  return (
    <div
      className={`flex h-[24px] w-[75px] items-center justify-center ${
        primary
          ? "border border-black shadow-[inset_1px_1px_0_#fff,inset_-1px_-1px_0_#8b897c]"
          : "border border-t-white border-r-[#716f64] border-b-[#716f64] border-l-white shadow-[inset_-1px_-1px_0_#aca899]"
      }`}
    >
      <Fit w={w} className="mt-[1px]">{label}</Fit>
    </div>
  );
}

function Dialog() {
  return (
    <div className={`absolute top-[383px] left-[477px] flex h-[237px] w-[335px] flex-col rounded-t-[7px] bg-[#0a3fd0] pb-[3px] text-[11px] text-black ${ARIAL}`}>
      <div className="flex h-[29px] items-center justify-between rounded-t-[7px] bg-[linear-gradient(to_bottom,#0b4fc8_0%,#3c8bff_9%,#0a62f2_18%,#0054e3_35%,#0058ea_60%,#0066ff_85%,#0048cc_100%)] pr-[5px] pl-[7px]">
        <Fit w={98} className={`mt-[4px] text-[13px] text-white [text-shadow:1px_1px_0_#0a2a80] ${CAPTION}`}>Tabular Options</Fit>
        <div className="mt-[2px] h-[21px] w-[21px] rounded-[3px] border border-white bg-[linear-gradient(135deg,#f0906c,#e0502c_50%,#c83c14)]">
          <Svg size={19} box={19}>
            <path stroke="#fff" strokeWidth="2.200" d="M4.500 4.500l10 10M14.500 4.500l-10 10" shapeRendering="auto" />
          </Svg>
        </div>
      </div>
      <div className="mx-[3px] flex flex-1 flex-col bg-[#ece9d8] pt-[19px]">
        <div className="flex flex-col">
          {options.map(([label, w, on]) => (
            <div key={label} className="flex h-[24.400px] items-center pl-[45px]">
              <div className="h-[12px] w-[12px] border-t-2 border-r border-b border-l-2 border-t-[#8b897c] border-r-white border-b-white border-l-[#8b897c] bg-white">
                {on && (
                  <svg width="9" height="9" viewBox="0 0 9 9" className="block" shapeRendering="crispEdges">
                    <path d="M1 3v3l2 2 5-5V0L3 5z" fill="#000" />
                  </svg>
                )}
              </div>
              <Fit w={w} className="mt-[2px] ml-[6px]">{label}</Fit>
            </div>
          ))}
        </div>
        <div className="mt-[6px] flex pl-[6px]">
          <DialogButton label="OK" w={15} primary />
          <div className="ml-[5px]"><DialogButton label="Cancel" w={33} /></div>
          <div className="ml-[10px]"><DialogButton label="All" w={12} /></div>
          <div className="ml-[5px]"><DialogButton label="Help" w={22} /></div>
        </div>
      </div>
    </div>
  );
}

function PenMarks() {
  return (
    <svg width="1280" height="1024" viewBox="0 0 1280 1024" className="pointer-events-none absolute top-0 left-0" fill="none" stroke="#000" shapeRendering="crispEdges">
      <path d="M65.500 186V155.500H71l5 1.500 6 4 14 6 14 7.500" />
      <path d="M66 161l7 6 5 11 7 10 6 11 14 15 13 17 8 12 5 12 6 8 1 3" />
      <path d="M477 489.500h41M510 480.500h2l1 2h3l2 5 1 4 2 3 2 5h2M504 500.500h21" />
    </svg>
  );
}

export default function App() {
  return (
    <div className="relative flex h-[1024px] w-[1280px] flex-col overflow-hidden bg-[#ece9d8]">
      <TitleBar />
      <div className="flex h-[948px] flex-col border-l-[4px] border-[#6d80de]">
        <MenuBar />
        <MainToolbar />
        <div className="relative h-[893px] overflow-hidden bg-[#808080] shadow-[inset_1px_0_0_#6b6960]">
          <DataSheet />
          <AnalysisWindow />
          <Minimised />
        </div>
      </div>
      <div className="h-[16px] border-l-[4px] border-[#6d80de]">
        <StatusBar />
      </div>
      <Taskbar />
      <Dialog />
      <PenMarks />
    </div>
  );
}
